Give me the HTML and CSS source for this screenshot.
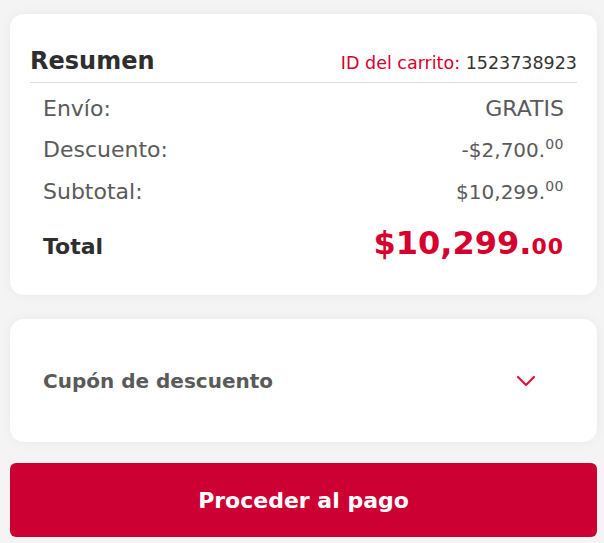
FILE: index.html
```html
<!DOCTYPE html>
<html lang="es">
<head>
<meta charset="utf-8">
<link rel="stylesheet" href="styles.css">
</head>
<body>
<div class="wrap">
  <section class="card summary">
    <header class="sum-head">
      <h2 class="sum-title">Resumen</h2>
      <div class="cart-id"><span class="cart-label">ID del carrito:</span> 1523738923</div>
    </header>
    <div class="rows">
      <div class="row"><span>Envío:</span><span class="amount">GRATIS</span></div>
      <div class="row"><span>Descuento:</span><span class="amount num">-$2,700.<sup class="cents">00</sup></span></div>
      <div class="row"><span>Subtotal:</span><span class="amount num">$10,299.<sup class="cents">00</sup></span></div>
      <div class="row total"><span class="total-label">Total</span><span class="total-price">$10,299.<span class="total-cents">00</span></span></div>
    </div>
  </section>
  <section class="card coupon">
    <span class="coupon-label">Cupón de descuento</span>
    <svg class="chev" width="20" height="12" viewBox="0 0 20 12"><path d="M2 2 L10 10 L18 2" fill="none" stroke="#e8103a" stroke-width="2.2" stroke-linecap="round" stroke-linejoin="round"/></svg>
  </section>
  <button class="pay">Proceder al pago</button>
</div>
</body>
</html>
```
FILE: styles.css
```css
html, body { margin: 0; padding: 0; }
body {
  background: #f4f4f4;
  font-family: "DejaVu Sans", "Liberation Sans", sans-serif;
  color: #5a5a5a;
}
.wrap {
  width: 587px;
  padding: 14px 0 0 10px;
  display: flex;
  flex-direction: column;
}
.card {
  background: #fff;
  border-radius: 14px;
  box-shadow: 0 0 12px rgba(0,0,0,0.05);
}
.summary {
  height: 281px;
  box-sizing: border-box;
  padding: 28px 20px 0 20px;
}
.sum-head {
  display: flex;
  justify-content: space-between;
  align-items: baseline;
  border-bottom: 1px solid #dcdcdc;
  height: 40px;
}
.sum-title {
  margin: 0;
  font-size: 24px;
  font-weight: 700;
  color: #2e2e2e;
  line-height: 38px;
}
.cart-id {
  font-size: 17.5px;
  color: #333;
}
.cart-label { color: #d6002f; }
.rows { padding: 5px 13px 0 13px; }
.row {
  display: flex;
  justify-content: space-between;
  align-items: baseline;
  font-size: 22px;
  line-height: 41px;
  color: #5a5a5a;
}
.amount.num { font-size: 20px; }
.cents { font-size: 14px; vertical-align: 8px; line-height: 0; letter-spacing: 0.5px; }
.row.total { margin-top: 12px; line-height: 36px; }
.total-label { font-size: 22px; font-weight: 700; color: #2e2e2e; }
.total-price { font-size: 32px; font-weight: 700; color: #d6002f; }
.total-cents { font-size: 22px; letter-spacing: 1px; }
.coupon {
  margin-top: 24px;
  height: 123px;
  display: flex;
  align-items: center;
  justify-content: space-between;
  padding: 0 61px 0 33px;
}
.coupon-label { font-size: 20px; font-weight: 700; color: #5a5a5a; }
.chev { display: block; }
.pay {
  margin-top: 21px;
  height: 74px;
  border: 0;
  border-radius: 6px;
  background: #cc0033;
  color: #fff;
  font-family: "DejaVu Sans", "Liberation Sans", sans-serif;
  font-size: 22px;
  font-weight: 700;
}
```
